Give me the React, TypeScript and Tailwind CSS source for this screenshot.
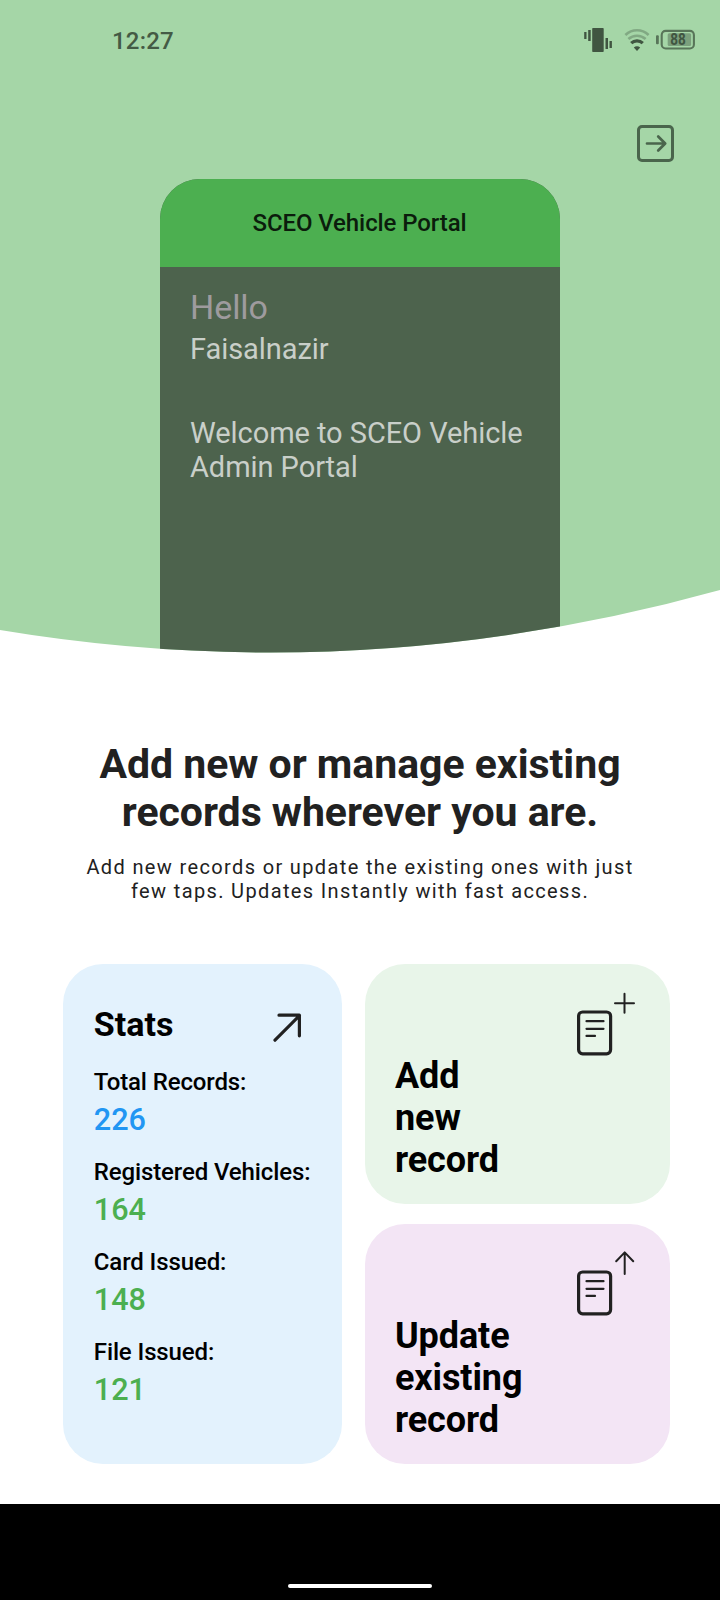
import type { ReactNode } from "react";

function VibrateIcon() {
  return (
    <svg width="30" height="26" viewBox="0 0 30 26" fill="#405541">
      <rect x="1.2" y="5" width="2.3" height="7" />
      <rect x="5.2" y="3" width="2.5" height="11" />
      <rect x="9.2" y="1" width="11.5" height="24" rx="0.8" />
      <rect x="22.5" y="11" width="2.5" height="11" />
      <rect x="26.5" y="14" width="2.4" height="7" />
    </svg>
  );
}

function WifiIcon() {
  return (
    <svg width="26" height="24" viewBox="0 0 26 24" fill="none" stroke="#405541" strokeWidth="2.6">
      <path d="M1.4 7C8.2 0.7 17.8 0.7 24.6 7" opacity="0.35" />
      <path d="M4.4 11C9.4 6.6 16.6 6.6 21.6 11" opacity="0.35" />
      <path d="M7.2 15.2C10.4 12.2 15.6 12.2 18.8 15.2" strokeWidth="3.2" />
      <path d="M13 23L9.8 19.4C11.6 17.8 14.4 17.8 16.2 19.4Z" fill="#405541" stroke="none" />
    </svg>
  );
}

function BatteryIcon() {
  return (
    <svg width="40" height="22" viewBox="0 0 40 22">
      <rect x="0" y="6.2" width="2.8" height="9" rx="1" fill="#587559" />
      <rect x="5.7" y="1.9" width="32.2" height="17.6" rx="4" fill="none" stroke="#587559" strokeWidth="2.1" />
      <rect x="11.7" y="4.3" width="23.4" height="12.8" rx="1.5" fill="#7ba07d" />
      <text
        x="22"
        y="16"
        textAnchor="middle"
        textLength="15.5"
        lengthAdjust="spacingAndGlyphs"
        className="fill-[#405541] font-['Roboto',sans-serif] text-[16px] font-bold"
      >
        88
      </text>
    </svg>
  );
}

function LogoutIcon() {
  return (
    <svg
      width="40"
      height="40"
      viewBox="0 0 40 40"
      fill="none"
      stroke="#4a654c"
      strokeWidth="3"
      strokeLinecap="round"
      strokeLinejoin="round"
    >
      <rect x="2.5" y="2.5" width="34" height="34" rx="3.5" />
      <path d="M11 19.5H29M22.2 12.5L29.2 19.5L22.2 26.5" strokeWidth="2.7" />
    </svg>
  );
}

function OpenIcon() {
  return (
    <svg
      width="30"
      height="30"
      viewBox="0 0 30 30"
      fill="none"
      stroke="#212121"
      strokeWidth="3.2"
      strokeLinecap="round"
      strokeLinejoin="round"
    >
      <path d="M2 28.2L26.4 3.7M6 3.2H26.4V23.8" />
    </svg>
  );
}

function RecordIcon({ children }: { children: ReactNode }) {
  return (
    <svg
      width="62"
      height="68"
      viewBox="0 0 62 68"
      fill="none"
      stroke="#212121"
      strokeWidth="2"
      strokeLinecap="round"
      strokeLinejoin="round"
    >
      <rect x="3.6" y="23" width="32" height="41.8" rx="4" strokeWidth="3.2" />
      <path d="M11.5 32.2H28.5M11.5 39.8H28.5M11.5 46.9H20" strokeWidth="2.2" />
      {children}
    </svg>
  );
}

function ActionCard({ lines, color, children }: { lines: string[]; color: string; children: ReactNode }) {
  return (
    <button className={`relative h-[240px] rounded-[40px] text-left ${color}`}>
      <span className="flex h-full flex-col justify-end pb-[23px] pl-[30px] text-[36px] leading-[42px] font-bold tracking-[-0.1px] text-black">
        {lines.map((line) => (
          <span key={line}>{line}</span>
        ))}
      </span>
      <span className="absolute top-[25px] right-[33px]">
        <RecordIcon>{children}</RecordIcon>
      </span>
    </button>
  );
}

const stats = [
  { label: "Total Records:", value: "226", color: "text-[#2196f3]" },
  { label: "Registered Vehicles:", value: "164", color: "text-[#4caf50]" },
  { label: "Card Issued:", value: "148", color: "text-[#4caf50]" },
  { label: "File Issued:", value: "121", color: "text-[#4caf50]" },
];

export default function App() {
  return (
    <div className="flex h-[1600px] w-[720px] flex-col overflow-hidden bg-white font-['Roboto',sans-serif]">
      <header className="flex h-[660px] shrink-0 flex-col bg-[#a5d6a7] [clip-path:path('M0_0H720V590Q360_690_0_630Z')]">
        <div className="flex h-[80px] items-center justify-between pr-[24px] pl-[112px] text-[#445a45]">
          <span className="mt-[2px] text-[24px] leading-[28px] font-medium tracking-[0.2px]">12:27</span>
          <div className="flex items-center">
            <VibrateIcon />
            <span className="ml-[11px]">
              <WifiIcon />
            </span>
            <span className="ml-[6px]">
              <BatteryIcon />
            </span>
          </div>
        </div>
        <div className="flex h-[99px] justify-end pt-[44px] pr-[44px]">
          <LogoutIcon />
        </div>
        <div className="mx-auto flex w-[400px] flex-1 flex-col overflow-hidden rounded-t-[40px] bg-[#4d634d]">
          <div className="flex h-[88px] items-center justify-center bg-[#4caf50] pr-[1px] text-[24px] font-medium tracking-[-0.1px] text-[#0b1c0c]">
            SCEO Vehicle Portal
          </div>
          <div className="px-[30px] pt-[20px] text-[29px] leading-[34px] tracking-[-0.06px] text-[#c9cfc9]">
            <p className="text-[34px] leading-[40px] text-[#9e9b9e]">Hello</p>
            <p className="mt-[5px]">Faisalnazir</p>
            <p className="mt-[50px]">
              Welcome to SCEO Vehicle
              <br />
              Admin Portal
            </p>
          </div>
        </div>
      </header>

      <section className="flex h-[304px] shrink-0 flex-col items-center pt-[80px] text-center text-[#212121]">
        <h1 className="text-[41px] leading-[48px] font-bold tracking-[-0.03px]">
          Add new or manage existing
          <br />
          records wherever you are.
        </h1>
        <p className="mt-[19px] text-[20px] leading-[24px] tracking-[1.36px]">
          Add new records or update the existing ones with just
          <br />
          few taps. Updates Instantly with fast access.
        </p>
      </section>

      <main className="flex h-[500px] shrink-0 gap-[23.4px] pr-[50px] pl-[63.4px]">
        <section className="flex w-[278.2px] shrink-0 flex-col rounded-[40px] bg-[#e3f2fd] pt-[40px] pl-[30.4px] text-black">
          <div className="flex h-[40px] items-center justify-between pr-[38.5px]">
            <h2 className="text-[34px] leading-[40px] font-bold">Stats</h2>
            <span className="mt-[6px]">
              <OpenIcon />
            </span>
          </div>
          <dl className="mt-[24px] flex flex-col gap-[14px]">
            {stats.map((s) => (
              <div key={s.label} className="h-[76px]">
                <dt className="text-[24px] leading-[28px] font-medium tracking-[-0.12px] whitespace-nowrap">{s.label}</dt>
                <dd className={`mt-[6px] text-[30.6px] leading-[36px] font-medium ${s.color}`}>{s.value}</dd>
              </div>
            ))}
          </dl>
        </section>
        <div className="flex flex-1 flex-col gap-[20px]">
          <ActionCard lines={["Add", "new", "record"]} color="bg-[#e8f5e9]">
            <path d="M40 14.2H59M49.5 4.7V23.7" />
          </ActionCard>
          <ActionCard lines={["Update", "existing", "record"]} color="bg-[#f3e5f5]">
            <path d="M49.7 25V3.4M41.2 12.2L49.7 3.4L58.2 12.2" />
          </ActionCard>
        </div>
      </main>

      <footer className="mt-[40px] flex h-[96px] shrink-0 items-end justify-center bg-black pb-[12px]">
        <div className="h-[4px] w-[144px] rounded-full bg-white" />
      </footer>
    </div>
  );
}
